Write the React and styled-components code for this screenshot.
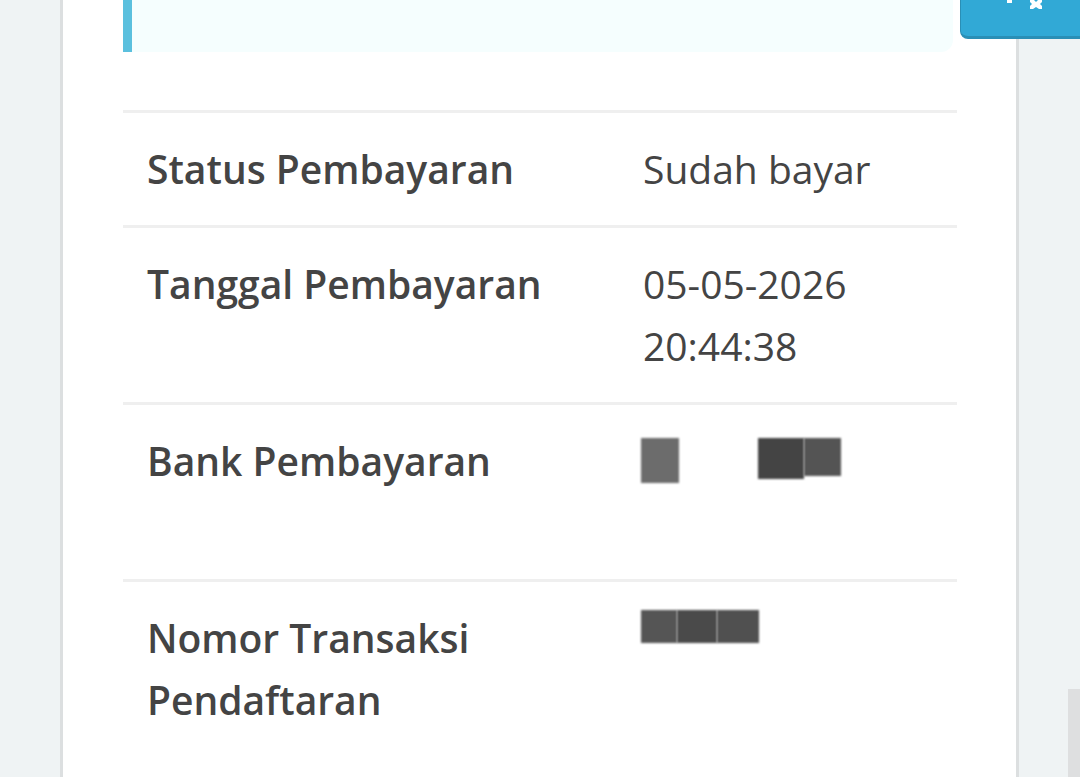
import React from 'react';
import styled, { createGlobalStyle } from 'styled-components';

const GlobalStyle = createGlobalStyle`
  html, body {
    margin: 0;
    padding: 0;
    height: 100%;
    overflow: hidden;
    background: #eff3f4;
  }
  #root {
    height: 100%;
  }
`;

const rows = [
  { label: ['Status Pembayaran'], value: ['Sudah bayar'] },
  { label: ['Tanggal Pembayaran'], value: ['05-05-2026', '20:44:38'] },
  { label: ['Bank Pembayaran'], redact: 'bank' },
  { label: ['Nomor Transaksi', 'Pendaftaran'], redact: 'trx', last: true },
];

function App() {
  return (
    <>
      <GlobalStyle />
      <Page>
        <Card>
          <Notice />
          <Table>
            {rows.map((row, i) => (
              <Row key={i} last={row.last}>
                <Label>
                  {row.label.map((l) => (
                    <div key={l}>{l}</div>
                  ))}
                </Label>
                <Value>
                  {row.value && row.value.map((v) => <div key={v}>{v}</div>)}
                  {row.redact === 'bank' && (
                    <>
                      <RedactLine top={8}>
                        <Blur w={38} h={45} shade="#6c6c6c" />
                        <Blur w={46} h={41} shade="#444" style={{ marginLeft: 79 }} />
                        <Blur w={37} h={38} shade="#545454" />
                      </RedactLine>
                      <RedactLine />
                    </>
                  )}
                  {row.redact === 'trx' && (
                    <RedactLine top={3}>
                      <Blur w={36} h={33} shade="#555" />
                      <Blur w={40} h={33} shade="#4a4a4a" />
                      <Blur w={42} h={33} shade="#505050" />
                    </RedactLine>
                  )}
                </Value>
              </Row>
            ))}
          </Table>
        </Card>
        <Gutter>
          <ScrollThumb />
        </Gutter>
        <FloatButton>
          <svg width="60" height="10" viewBox="0 0 60 10">
            <rect x="0" y="0" width="5" height="3" fill="#fff" />
            <path d="M23 0h4l2 2 2-2h4v2l-2 2 2 2v3h-3l-3-2-3 2h-3v-3l2-2-2-2z" fill="#fff" />
          </svg>
        </FloatButton>
      </Page>
    </>
  );
}

const Page = styled.div`
  position: relative;
  display: flex;
  height: 100%;
  padding-left: 60px;
  box-sizing: border-box;
  font-family: 'Open Sans', 'Noto Sans', sans-serif;
  color: #444;
`;

const Card = styled.div`
  background: #fff;
  border-left: 3px solid #dcdfe0;
  border-right: 3px solid #dcdfe0;
  padding: 0 59px 0 60px;
  box-sizing: content-box;
  width: 834px;
`;

const Notice = styled.div`
  height: 52px;
  width: 830px;
  background: #f5fefe;
  border-left: 9px solid #5bc0de;
  border-radius: 0 0 12px 0;
  box-sizing: border-box;
`;

const Table = styled.div`
  margin-top: 58px;
  border-top: 3px solid #efefef;
`;

const Row = styled.div`
  display: grid;
  grid-template-columns: 496px 1fr;
  border-bottom: 3px solid #efefef;
  padding: 25px 0 ${(p) => (p.last ? 80 : 25)}px;
  font-size: 39px;
  line-height: 62px;
  min-height: 62px;
`;

const Label = styled.div`
  padding-left: 24px;
  font-weight: 600;
`;

const Value = styled.div`
  padding-left: 24px;
  font-weight: 400;
`;

const RedactLine = styled.div`
  display: flex;
  align-items: flex-start;
  height: 62px;
  padding-top: ${(p) => p.top || 0}px;
  box-sizing: border-box;
  margin-left: -2px;
`;

const Blur = styled.span`
  display: inline-block;
  width: ${(p) => p.w}px;
  height: ${(p) => p.h}px;
  background: ${(p) => p.shade};
  filter: blur(1px);
`;

const Gutter = styled.div`
  flex: 1;
  display: flex;
  justify-content: flex-end;
  align-items: flex-end;
`;

const ScrollThumb = styled.div`
  width: 12px;
  height: 88px;
  background: #dedfe0;
`;

const FloatButton = styled.div`
  position: absolute;
  top: 0;
  left: 960px;
  width: 130px;
  height: 36px;
  background: #31a9d6;
  border-bottom: 3px solid #2a8fb6;
  border-left: 1px solid #2a8fb6;
  border-radius: 0 0 0 8px;
  padding-left: 46px;
  box-sizing: content-box;
  overflow: hidden;

  svg {
    display: block;
  }
`;

export default App;
